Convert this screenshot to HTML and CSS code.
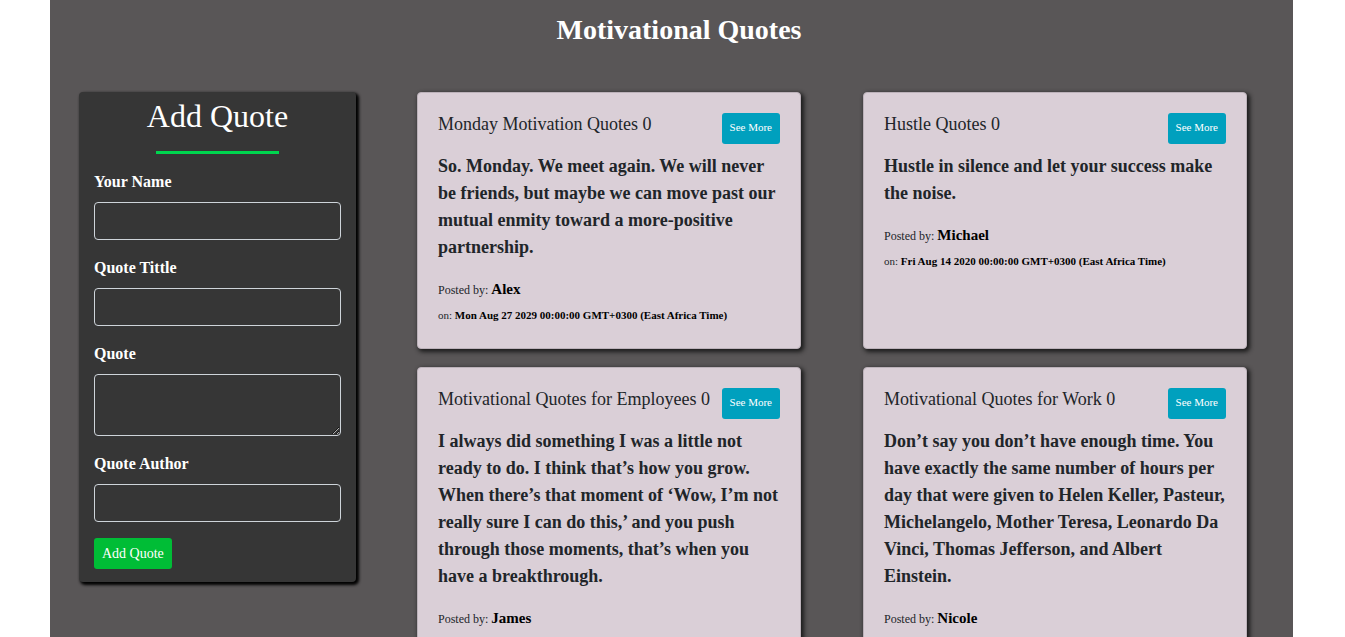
FILE: index.html
```html
<!DOCTYPE html>
<html lang="en">
<head>
<meta charset="utf-8">
<title>Motivational Quotes</title>
<link rel="stylesheet" href="styles.css">
</head>
<body>
<div class="page">
  <h1 class="page-title">Motivational Quotes</h1>
  <main class="layout">
    <form class="quote-form">
      <h2 class="form-title">Add Quote</h2>
      <hr class="form-rule">
      <div class="field">
        <label for="name">Your Name</label>
        <input id="name" type="text">
      </div>
      <div class="field">
        <label for="title">Quote Tittle</label>
        <input id="title" type="text">
      </div>
      <div class="field">
        <label for="quote">Quote</label>
        <textarea id="quote" rows="2"></textarea>
      </div>
      <div class="field">
        <label for="author">Quote Author</label>
        <input id="author" type="text">
      </div>
      <button class="add-button" type="submit">Add Quote</button>
    </form>
    <section class="quotes">
      <article class="card">
        <header class="card-header">
          <h3 class="card-title">Monday Motivation Quotes 0</h3>
          <button class="more-button" type="button">See More</button>
        </header>
        <p class="quote-text">So. Monday. We meet again. We will never be friends, but maybe we can move past our mutual enmity toward a more-positive partnership.</p>
        <p class="posted">Posted by: <strong>Alex</strong></p>
        <p class="date">on: <strong>Mon Aug 27 2029 00:00:00 GMT+0300 (East Africa Time)</strong></p>
      </article>
      <article class="card">
        <header class="card-header">
          <h3 class="card-title">Hustle Quotes 0</h3>
          <button class="more-button" type="button">See More</button>
        </header>
        <p class="quote-text">Hustle in silence and let your success make the noise.</p>
        <p class="posted">Posted by: <strong>Michael</strong></p>
        <p class="date">on: <strong>Fri Aug 14 2020 00:00:00 GMT+0300 (East Africa Time)</strong></p>
      </article>
      <article class="card">
        <header class="card-header">
          <h3 class="card-title">Motivational Quotes for Employees 0</h3>
          <button class="more-button" type="button">See More</button>
        </header>
        <p class="quote-text">I always did something I was a little not ready to do. I think that’s how you grow. When there’s that moment of ‘Wow, I’m not really sure I can do this,’ and you push through those moments, that’s when you have a breakthrough.</p>
        <p class="posted">Posted by: <strong>James</strong></p>
      </article>
      <article class="card">
        <header class="card-header">
          <h3 class="card-title">Motivational Quotes for Work 0</h3>
          <button class="more-button" type="button">See More</button>
        </header>
        <p class="quote-text">Don’t say you don’t have enough time. You have exactly the same number of hours per day that were given to Helen Keller, Pasteur, Michelangelo, Mother Teresa, Leonardo Da Vinci, Thomas Jefferson, and Albert Einstein.</p>
        <p class="posted">Posted by: <strong>Nicole</strong></p>
      </article>
    </section>
  </main>
</div>
</body>
</html>
```
FILE: styles.css
```css
* {
  box-sizing: border-box;
}

html {
  scrollbar-width: none;
}

body {
  margin: 0;
  background: #fff;
  color: #212529;
  font: 16px/24px "Liberation Serif", "Times New Roman", serif;
}

h1, h2, h3, p {
  margin: 0;
}

.page {
  min-height: 100vh;
  margin: 0 52px 0 50px;
  padding: 12px 46px 18px 29px;
  background: #595657;
}

.page-title {
  padding-left: 32px;
  color: #fff;
  font-size: 28px;
  line-height: 36px;
  text-align: center;
}

.layout {
  display: grid;
  grid-template-columns: 277fr 830fr;
  gap: 61px;
  align-items: start;
  margin-top: 44px;
}

.quote-form {
  padding: 5px 15px 13px;
  border-radius: 4px;
  background: #363636;
  box-shadow: 2px 2px 3px 1px #000;
  color: #fff;
}

.form-title {
  font-size: 32px;
  font-weight: 400;
  line-height: 38px;
  text-align: center;
}

.form-rule {
  width: 50%;
  height: 3px;
  margin: 16px auto;
  border: 0;
  background: #00d64f;
}

.field {
  display: grid;
  gap: 8px;
  margin-bottom: 16px;
}

.field label {
  font-weight: 700;
}

.field input,
.field textarea {
  display: block;
  width: 100%;
  height: 38px;
  padding: 6px 12px;
  border: 1px solid #ced4da;
  border-radius: 4px;
  background: transparent;
  color: #fff;
  font: inherit;
}

.field textarea {
  height: 62px;
  resize: vertical;
}

.add-button,
.more-button {
  display: block;
  height: 31px;
  padding: 4px 8px;
  border: 0;
  border-radius: 3px;
  color: #fff;
  font-family: inherit;
  cursor: pointer;
}

.add-button {
  background: #00bd36;
  font-size: 14px;
  line-height: 21px;
}

.quotes {
  display: grid;
  grid-template-columns: 1fr 1fr;
  gap: 18px 62px;
}

.card {
  padding: 20px;
  border: 1px solid #bcb2ba;
  border-radius: 4px;
  background: #dacfd7;
  box-shadow: 2px 2px 4px 1px #1c1c1c;
}

.card-header {
  display: flex;
  justify-content: space-between;
  align-items: flex-start;
  margin-bottom: 9px;
}

.card-title {
  font-size: 18px;
  font-weight: 400;
  line-height: 22px;
}

.more-button {
  flex: none;
  padding: 4px 8px 8px;
  background: #00a0be;
  font-size: 11px;
  line-height: 18px;
}

.quote-text {
  margin-bottom: 15px;
  font-size: 18px;
  font-weight: 700;
  line-height: 27px;
}

.posted {
  font-size: 12px;
  line-height: 26px;
}

.posted strong {
  color: #000;
  font-size: 15px;
}

.date {
  font-size: 11px;
  line-height: 25px;
}

.date strong {
  color: #000;
}
```
